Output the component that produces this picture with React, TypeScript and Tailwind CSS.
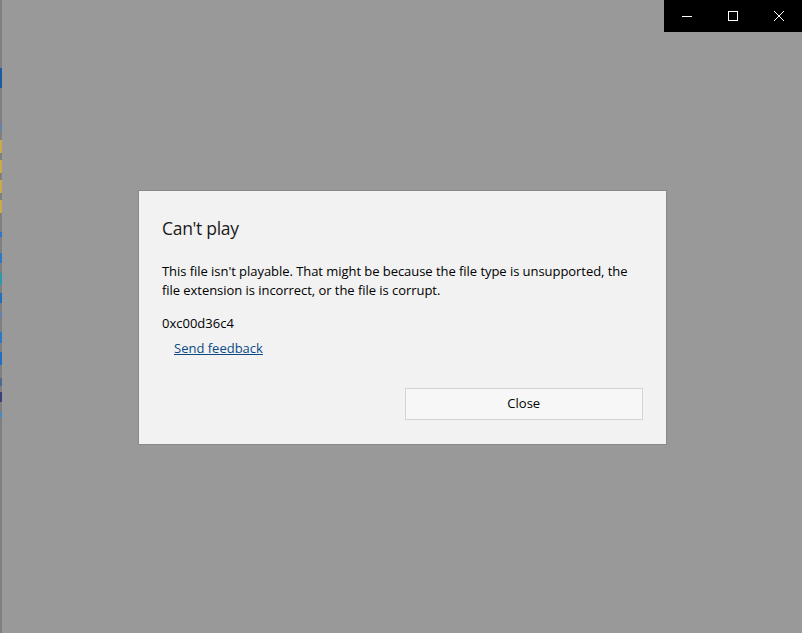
const edgeBits = [
  { top: 68, h: 20, c: "#1a5aa0" },
  { top: 123, h: 8, c: "#6a7fa8" },
  { top: 140, h: 13, c: "#c9a94a" },
  { top: 160, h: 13, c: "#c9a94a" },
  { top: 180, h: 13, c: "#c9a94a" },
  { top: 200, h: 13, c: "#c9a94a" },
  { top: 232, h: 5, c: "#2a78c8" },
  { top: 253, h: 10, c: "#2a78c8" },
  { top: 273, h: 12, c: "#2a9aa8" },
  { top: 293, h: 10, c: "#1e6fc0" },
  { top: 312, h: 6, c: "#6a7fa8" },
  { top: 332, h: 11, c: "#2a78c8" },
  { top: 352, h: 13, c: "#1e6fc0" },
  { top: 378, h: 8, c: "#4d6a8a" },
  { top: 392, h: 10, c: "#3b3f7a" },
  { top: 412, h: 6, c: "#4a8ab8" },
]

function TitleButtons() {
  return (
    <div className="absolute right-0 top-0 flex h-8 bg-black text-white">
      <div className="flex h-8 w-[46px] items-center justify-center">
        <svg width="10" height="10" viewBox="0 0 10 10">
          <path d="M0 5.5h10" stroke="white" strokeWidth="1" />
        </svg>
      </div>
      <div className="flex h-8 w-[46px] items-center justify-center">
        <svg width="10" height="10" viewBox="0 0 10 10">
          <rect x="0.5" y="0.5" width="9" height="9" fill="none" stroke="white" strokeWidth="1" />
        </svg>
      </div>
      <div className="flex h-8 w-[46px] items-center justify-center">
        <svg width="10" height="10" viewBox="0 0 10 10">
          <path d="M0 0L10 10M10 0L0 10" stroke="white" strokeWidth="1" />
        </svg>
      </div>
    </div>
  )
}

export default function App() {
  return (
    <div
      className="relative flex h-[633px] w-[802px] items-start overflow-hidden bg-[#999999]"
      style={{ fontFamily: '"Open Sans", "Noto Sans", sans-serif' }}
    >
      {/* window edge peeking from behind the overlay */}
      <div className="absolute left-0 top-0 h-full w-[2px] bg-[#7f7f7f]">
        {edgeBits.map((b, i) => (
          <div
            key={i}
            className="absolute left-0 w-[2px]"
            style={{ top: b.top, height: b.h, background: b.c }}
          />
        ))}
      </div>

      <TitleButtons />

      <div className="ml-[138px] mt-[190px] w-[529px] border border-[#8a8a8a] bg-[#f2f2f2] pb-6 pl-[23px] pr-[23px] pt-[23px]">
        <h1 className="text-[17.5px] leading-7 tracking-[-0.3px] text-[#1a1a1a]">Can't play</h1>
        <p className="mt-[20px] text-[13px] leading-[19px] tracking-[-0.05px] text-black">
          This file isn't playable. That might be because the file type is unsupported, the
          file extension is incorrect, or the file is corrupt.
        </p>
        <p className="mt-[14px] text-[13px] leading-[19px] text-black">0xc00d36c4</p>
        <div className="mt-[2px] pl-3">
          <a href="#" className="text-[13px] leading-[19px] text-[#0b4a85] underline">
            Send feedback
          </a>
        </div>
        <div className="mt-[29px] grid grid-cols-2 gap-1">
          <div />
          <button className="h-8 border border-[#d4d4d4] bg-[#f7f7f7] text-[13px] text-black">
            Close
          </button>
        </div>
      </div>
    </div>
  )
}
